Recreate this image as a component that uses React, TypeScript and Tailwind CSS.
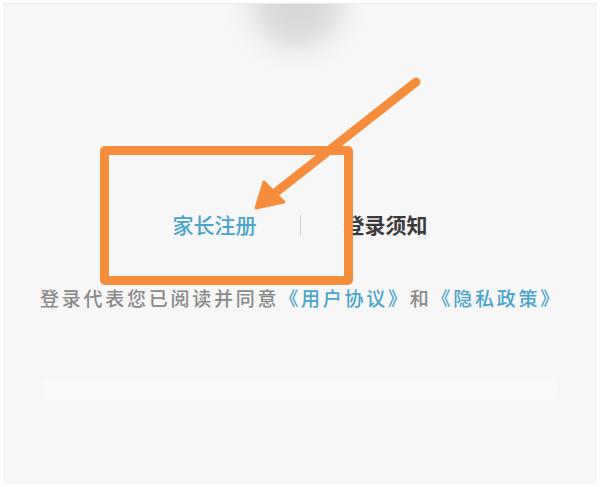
export default function App() {
  const font = { fontFamily: '"Noto Sans CJK SC", "Noto Sans", sans-serif' };

  return (
    <div className="w-[600px] h-[487px] bg-white p-[3px]" style={font}>
      <div className="relative h-full w-full overflow-hidden bg-[#f7f7f7] border-t border-[#ececec]">
        {/* blurred avatar shadow at top */}
        <div className="absolute left-[248px] top-[-48px] h-[92px] w-[92px] rounded-full bg-[#d8d8d8] blur-[14px]" />

        <div className="relative flex flex-col items-center pt-[210px]">
          <div className="flex items-center leading-none">
            <span className="text-[21px] text-[#4aa5cb] font-medium">家长注册</span>
            <span className="mx-[43px] h-[20px] w-px bg-[#cfcfcf]" />
            <span className="text-[21px] text-[#3b3b3b] font-semibold">登录须知</span>
          </div>

          <p className="mt-[53px] pl-[2px] text-[19px] font-medium leading-none tracking-[2.75px] text-[#8a8a8a]">
            登录代表您已阅读并同意
            <span className="text-[#4aa5cb]">《用户协议》</span>
            和
            <span className="text-[#4aa5cb]">《隐私政策》</span>
          </p>

          <div className="mt-[72px] h-[19px] w-[513px] rounded-sm bg-[#f9f9f9]" />
        </div>

        {/* annotation: orange frame */}
        <div className="absolute left-[97px] top-[142px] h-[139px] w-[253px] rounded-[5px] border-[9px] border-[#f68d3c]" />

        {/* annotation: arrow */}
        <svg className="absolute left-0 top-0" width="594" height="481" viewBox="0 0 594 481">
          <g transform="translate(-3 -3)">
            <line x1="416" y1="81" x2="275" y2="192" stroke="#f68d3c" strokeWidth="9" strokeLinecap="round" />
            <polygon points="256,207 264,181 284,201" fill="#f68d3c" stroke="#f68d3c" strokeWidth="3" strokeLinejoin="round" />
          </g>
        </svg>
      </div>
    </div>
  );
}
